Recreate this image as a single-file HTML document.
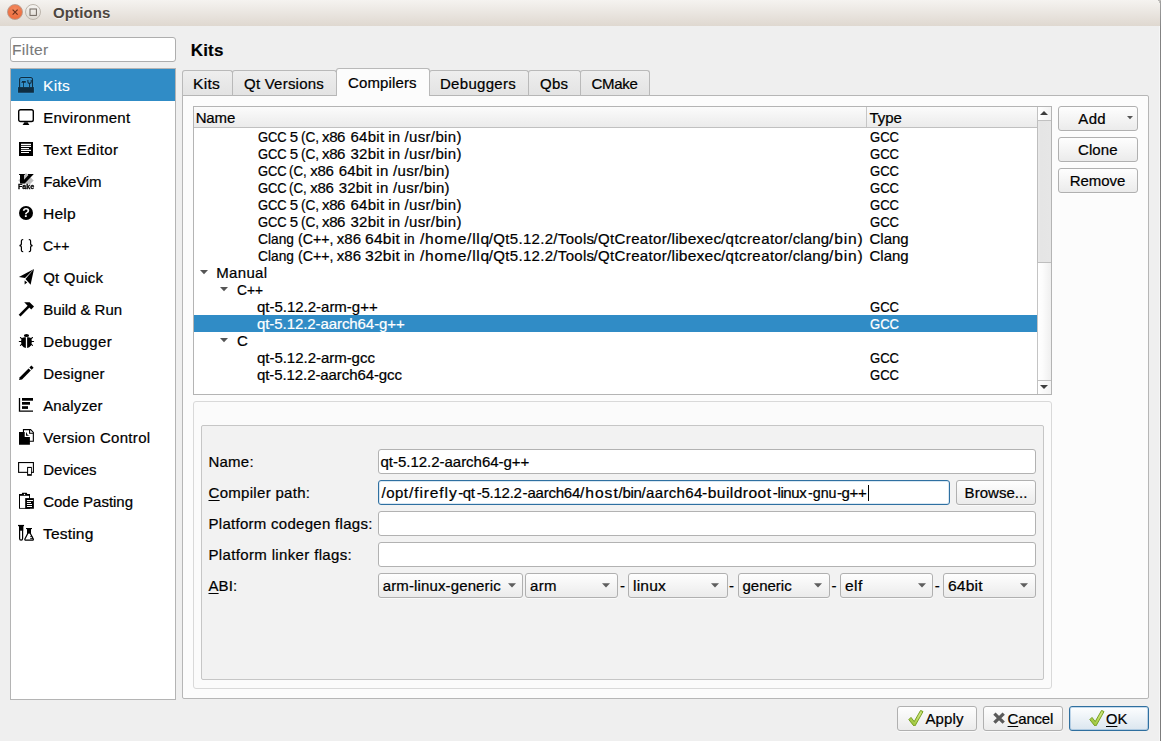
<!DOCTYPE html>
<html><head><meta charset="utf-8"><title>Options</title>
<style>
*{box-sizing:border-box;margin:0;padding:0}
html,body{width:1161px;height:741px;overflow:hidden}
body{background:#efefef;font-family:"Liberation Sans",sans-serif;font-size:15px;color:#000;position:relative}
div,span,svg{position:absolute}
span.t{white-space:pre;line-height:17px;height:17px;-webkit-text-stroke:0.22px}
u{text-decoration:underline;text-underline-offset:2px;text-decoration-thickness:1px}
#titlebar{left:0;top:0;width:1161px;height:26px;background:linear-gradient(#f5f3f0,#ebe7e2 45%,#dfd8d0);}
.wb{top:4px;width:16px;height:16px;border-radius:8px}
#filter{left:10px;top:37px;width:166px;height:25px;background:#fff;border:1px solid #aeaeae;border-radius:3px}
#side{left:10px;top:68px;width:166px;height:632px;background:#fff;border:1px solid #b4b4b4}
#selrow{left:11px;top:69px;width:164px;height:32px;background:#308cc6}
svg.ic{width:16px;height:16px;left:18px;overflow:visible}
#pane{left:182px;top:95px;width:967px;height:604px;background:#fcfcfc;border:1px solid #b6b6b6;border-radius:0 2px 2px 2px}
.tab{top:70px;height:26px;border:1px solid #b9b9b9;border-bottom:1px solid #b6b6b6;border-radius:3px 3px 0 0;background:linear-gradient(#eeeeee,#e3e3e3)}
.tab.on{top:68px;height:28px;background:#fcfcfc;border-bottom:none}
#tree{left:193px;top:106px;width:859px;height:289px;background:#fff;border:1px solid #b4b4b4}
#hdr{left:194px;top:107px;width:843px;height:21px;background:linear-gradient(#fbfbfb,#ebebeb);border-bottom:1px solid #c0c0c0}
#treesel{left:194px;top:315px;width:843px;height:17px;background:#308cc6}
.btn{border:1px solid #b0b0b0;border-radius:3px;background:linear-gradient(#fefefe,#ebebeb);height:25px;box-shadow:0 1px 0 rgba(255,255,255,.6)}
.inp{background:#fff;border:1px solid #b2b2b2;border-radius:3px;height:25px}
#gb1{left:193px;top:401px;width:859px;height:288px;border:1px solid #d9d9d9;border-radius:3px;background:#fbfbfb}
#gb2{left:201px;top:425px;width:843px;height:255px;border:1px solid #c6c6c6;border-radius:2px;background:#f2f2f2}
.r{left:0;top:0;width:0;height:0}
</style></head><body>
<div id="titlebar"></div>
<div class="wb" style="left:6.5px;background:radial-gradient(circle at 50% 30%,#f28a5f,#ef7345 60%,#ec6a3a);border:1px solid #bd9c8c"></div>
<svg style="left:6.5px;top:4px;width:16px;height:16px" viewBox="0 0 16 16"><path d="M5.6 5.6 L10.6 10.6 M10.6 5.6 L5.6 10.6" stroke="#6a301b" stroke-width="1.15" fill="none"/></svg>
<div class="wb" style="left:25px;background:linear-gradient(#f6f4f1,#dfdad3);border:1px solid #bcb5ac"></div>
<svg style="left:25px;top:4px;width:16px;height:16px" viewBox="0 0 16 16"><rect x="5" y="5" width="6.4" height="6.4" stroke="#6e675f" stroke-width="1" fill="none"/></svg>
<span class="t" style="left:53px;top:4px;font-weight:bold;color:#4c4640;letter-spacing:0.114px;-webkit-text-stroke:0;text-shadow:0 1px 0 rgba(255,255,255,.7);">Options</span>
<div style="left:1159px;top:26px;width:1px;height:715px;background:#f6f6f6"></div><div style="left:1160px;top:1px;width:1px;height:740px;background:linear-gradient(#a2a2a2,#828282 30px,#7c7c7c)"></div><div style="left:1158px;top:0;width:3px;height:1px;background:#b9b7b4"></div><div style="left:1159px;top:1px;width:1px;height:2px;background:#c4c2bf"></div>
<div id="filter"></div><span class="t" style="left:12.4px;top:41px;color:#7a7a7a;transform:scaleX(1.0400);transform-origin:0 0;letter-spacing:0.294px;-webkit-text-stroke:0.1px;">Filter</span>
<div id="side"></div><div id="selrow"></div>
<span class="t" style="left:43.2px;top:77px;color:#fff;transform:scaleX(1.0400);transform-origin:0 0;letter-spacing:0.293px;-webkit-text-stroke:0.1px;">Kits</span>
<span class="t" style="left:43.2px;top:109px;letter-spacing:0.276px;">Environment</span>
<span class="t" style="left:43.2px;top:141px;letter-spacing:0.393px;">Text Editor</span>
<span class="t" style="left:43.2px;top:173px;letter-spacing:-0.102px;">FakeVim</span>
<span class="t" style="left:43.2px;top:205px;transform:scaleX(1.0400);transform-origin:0 0;letter-spacing:0.183px;">Help</span>
<span class="t" style="left:43.2px;top:237px;transform:scaleX(0.9338);transform-origin:0 0;">C++</span>
<span class="t" style="left:43.2px;top:269px;letter-spacing:0.194px;">Qt Quick</span>
<span class="t" style="left:43.2px;top:301px;letter-spacing:-0.037px;">Build &amp; Run</span>
<span class="t" style="left:43.2px;top:333px;letter-spacing:0.373px;">Debugger</span>
<span class="t" style="left:43.2px;top:365px;letter-spacing:0.181px;">Designer</span>
<span class="t" style="left:43.2px;top:397px;letter-spacing:0.148px;">Analyzer</span>
<span class="t" style="left:43.2px;top:429px;letter-spacing:0.313px;">Version Control</span>
<span class="t" style="left:43.2px;top:461px;letter-spacing:0.008px;">Devices</span>
<span class="t" style="left:43.2px;top:493px;letter-spacing:-0.020px;">Code Pasting</span>
<span class="t" style="left:43.2px;top:525px;transform:scaleX(1.0400);transform-origin:0 0;letter-spacing:0.149px;">Testing</span>
<svg class="ic" style="top:77px" viewBox="0 0 16 16"><g opacity="0.75"><rect x="1.6" y="0.5" width="12.9" height="12" rx="2" fill="none" stroke="#3d9bd8" stroke-width="2.0"/><rect x="0.05" y="10.1" width="15.85" height="5.65" fill="#3d9bd8" stroke="#3d9bd8" stroke-width="1.2"/><path d="M3.1 5.7 L4.2 4.1 H7.8 V5.7 Z M5.1 5.7 H5.95 V10.2 H5.1 Z" fill="#3d9bd8" stroke="#3d9bd8" stroke-width="1.2"/><path d="M9.9 3 V4.9 Q9.9 6.3 11.55 6.3 Q13.2 6.3 13.2 4.9 V3" fill="none" stroke="#3d9bd8" stroke-width="2.0"/><path d="M11.6 6 V10.2" stroke="#3d9bd8" stroke-width="1.9"/></g><rect x="1.6" y="0.5" width="12.9" height="12" rx="2" fill="none" stroke="#0f2d41" stroke-width="1.15"/><rect x="0.05" y="10.1" width="15.85" height="5.65" fill="#0f2d41" stroke="#0f2d41" stroke-width="0"/><path d="M3.1 5.7 L4.2 4.1 H7.8 V5.7 Z M5.1 5.7 H5.95 V10.2 H5.1 Z" fill="#0f2d41" stroke="#0f2d41" stroke-width="0"/><path d="M9.9 3 V4.9 Q9.9 6.3 11.55 6.3 Q13.2 6.3 13.2 4.9 V3" fill="none" stroke="#0f2d41" stroke-width="1.15"/><path d="M11.6 6 V10.2" stroke="#0f2d41" stroke-width="1"/></svg>
<svg class="ic" style="top:109px" viewBox="0 0 16 16"><rect x="0.7" y="0.7" width="14.6" height="11.8" rx="1.8" fill="#fff" stroke="#000" stroke-width="1.4"/><path d="M6.4 13.2 H9.6 L11.4 16 H4.6 Z" fill="#000"/></svg>
<svg class="ic" style="top:141px" viewBox="0 0 16 16"><rect x="1" y="1" width="14" height="14" fill="#000"/><path d="M3 3.3 H13 M3 5.4 H13 M3 7.5 H11 M3 9.4 H13 M3 11.5 H11" stroke="#fff" stroke-width="1.15"/></svg>
<svg class="ic" style="top:173px;will-change:transform" viewBox="0 0 16 16"><path d="M8 0 L15.7 7.6 L8 15.2 L0.3 7.6 Z" fill="#bcbcbc"/><path d="M1 0.9 H6.85 V2 H6 V6.7 L10.5 2 H9.9 V1 H15.6 V1.3 L6.7 10.4 H2 V2 H1 Z" fill="#000"/><rect x="-0.3" y="10.9" width="16.6" height="5.1" fill="#fff" opacity="0.85"/><text x="-0.1" y="15.9" font-family="Liberation Sans, sans-serif" font-weight="bold" font-size="6.8" textLength="16.2" lengthAdjust="spacingAndGlyphs" fill="#000" stroke="#000" stroke-width="0.3">Fake</text></svg>
<svg class="ic" style="top:205px;will-change:transform" viewBox="0 0 16 16"><circle cx="8" cy="8" r="7" fill="#000"/><text x="8" y="12.3" text-anchor="middle" font-family="Liberation Sans, sans-serif" font-weight="bold" font-size="12.5" fill="#fff" opacity="0.99">?</text></svg>
<svg class="ic" style="top:237px" viewBox="0 0 16 16"><path d="M5.2 2.6 Q3.4 2.4 3.4 4.2 V6.6 Q3.4 8.6 1.4 8.6 Q3.4 8.6 3.4 10.6 V13 Q3.4 14.8 5.2 14.6" fill="none" stroke="#000" stroke-width="1.2"/><path d="M10.8 2.6 Q12.6 2.4 12.6 4.2 V6.6 Q12.6 8.6 14.6 8.6 Q12.6 8.6 12.6 10.6 V13 Q12.6 14.8 10.8 14.6" fill="none" stroke="#000" stroke-width="1.2"/></svg>
<svg class="ic" style="top:269px" viewBox="0 0 16 16"><path d="M0.9 8 L16 0 L7 8.9 Z" fill="#000"/><path d="M16 0 L12.6 15.8 L7.5 10 Z" fill="#000"/><path d="M6.6 11.6 V15.6 L9.2 13.4 Z" fill="#000"/></svg>
<svg class="ic" style="top:301px" viewBox="0 0 16 16"><path d="M1.6 14.6 L11 5.2" stroke="#000" stroke-width="2.6"/><path d="M6.2 1.2 H11.6 L16 5.6 L13.2 8.4 L9.4 4.6 Z" fill="#000"/></svg>
<svg class="ic" style="top:333px" viewBox="0 0 16 16"><ellipse cx="8.47" cy="2.5" rx="2.6" ry="1.5" fill="#000"/><path d="M7.85 4.3 V15 Q5.4 14.6 4 12.4 Q2.9 10.4 3.1 8 Q3.2 5.8 4.4 4.7 Q5.6 4 7.85 4.3 Z" fill="#000"/><path d="M9.1 4.3 V15 Q11.5 14.6 12.9 12.4 Q14 10.4 13.85 8 Q13.7 5.8 12.5 4.7 Q11.3 4 9.1 4.3 Z" fill="#000"/><path d="M2.4 4.5 L4 5.8 M1.3 8.47 H3.4 M2.4 12.45 L4.2 11 M14.5 4.5 L12.9 5.8 M15.6 8.47 H13.5 M14.5 12.45 L12.7 11" stroke="#000" stroke-width="1.05" stroke-linecap="round"/></svg>
<svg class="ic" style="top:365px" viewBox="0 0 16 16"><path d="M1 15 L1.8 12.2 L10.6 3.4 L12.8 5.6 L4 14.4 Z" fill="#000"/><path d="M11.4 2.6 L13.4 0.6 L15.6 2.8 L13.6 4.8 Z" fill="#000"/></svg>
<svg class="ic" style="top:397px" viewBox="0 0 16 16"><path d="M1.5 0.9 V14.2 H15" fill="none" stroke="#000" stroke-width="1.3"/><rect x="4" y="1" width="11" height="2.7"/><rect x="4" y="5" width="8" height="2.7"/><rect x="4" y="9.2" width="6" height="2.7"/></svg>
<svg class="ic" style="top:429px" viewBox="0 0 16 16"><path d="M5.45 0.6 H12.6 L15.35 3.4 V12.3 H5.45 Z" fill="#fff" stroke="#000" stroke-width="1.1"/><path d="M11.6 0.6 V4.2 H15.3" fill="none" stroke="#000" stroke-width="1.1"/><path d="M1 3 H6.7 V8.1 H11.9 V15.75 H1 Z" fill="#000"/><path d="M8 3.2 V6.85 H11.7 Q9 6 8.3 3.2 Z" fill="#000"/></svg>
<svg class="ic" style="top:461px" viewBox="0 0 16 16"><rect x="0.6" y="1.55" width="14.8" height="9.8" fill="#fff" stroke="#000" stroke-width="1.1"/><rect x="9.1" y="5.9" width="4.7" height="8.9" fill="#000"/><rect x="10.1" y="7" width="2.9" height="6.1" fill="#fff"/></svg>
<svg class="ic" style="top:493px" viewBox="0 0 16 16"><rect x="1" y="1" width="11" height="14.75" fill="#000"/><rect x="2" y="2.8" width="9.05" height="12.15" fill="#fff"/><rect x="3.9" y="-0.25" width="5.2" height="1.6" rx="0.4" fill="#000"/><circle cx="6.5" cy="1.5" r="0.7" fill="#fff"/><rect x="7.2" y="5.1" width="8.7" height="10.65" fill="#000"/><path d="M8.95 7.5 H14.95 M8.95 9.45 H13 M8.95 11.5 H14 M8.95 13.5 H14" stroke="#fff" stroke-width="1"/></svg>
<svg class="ic" style="top:525px" viewBox="0 0 16 16"><path d="M0 0.55 H6.05" stroke="#000" stroke-width="1.3"/><path d="M1.6 1 V13.6 Q1.6 15.2 3.1 15.2 Q4.6 15.2 4.6 13.6 V1" fill="#fff" stroke="#000" stroke-width="1.2"/><rect x="1" y="1" width="4.2" height="4.7" fill="#000"/><path d="M8 3.55 H14" stroke="#000" stroke-width="1.1"/><path d="M9.7 4 V8.6 L6.9 14 Q6.5 15.2 7.8 15.2 H14.4 Q15.7 15.2 15.3 14 L12.4 8.6 V4" fill="#fff" stroke="#000" stroke-width="1.2"/><rect x="9.1" y="4" width="3.9" height="4.6" fill="#000"/><path d="M12.2 11.6 H14.3 M12.2 13.6 H15" stroke="#000" stroke-width="0.9"/></svg>
<span class="t" style="left:190.7px;top:42px;font-size:17px;font-weight:bold;letter-spacing:0.213px;-webkit-text-stroke:0.15px;">Kits</span>
<div id="pane"></div>
<div class="tab" style="left:182px;width:51px"></div><span class="t" style="left:193.3px;top:75px;transform:scaleX(1.0400);transform-origin:0 0;letter-spacing:0.293px;">Kits</span>
<div class="tab" style="left:232px;width:105px"></div><span class="t" style="left:244px;top:75px;letter-spacing:0.227px;">Qt Versions</span>
<div class="tab on" style="left:336px;width:94px"></div><span class="t" style="left:348px;top:74px;letter-spacing:0.136px;">Compilers</span>
<div class="tab" style="left:429px;width:100px"></div><span class="t" style="left:440px;top:75px;letter-spacing:0.290px;">Debuggers</span>
<div class="tab" style="left:528px;width:53px"></div><span class="t" style="left:540px;top:75px;letter-spacing:0.245px;">Qbs</span>
<div class="tab" style="left:580px;width:70px"></div><span class="t" style="left:591.5px;top:75px;letter-spacing:-0.292px;">CMake</span>
<div id="tree"></div><div id="hdr"></div><div id="treesel"></div>
<div style="left:866px;top:107px;width:1px;height:20px;background:#c6c6c6"></div>
<span class="t" style="left:195.7px;top:109px;letter-spacing:-0.157px;">Name</span><span class="t" style="left:869.5px;top:109px;letter-spacing:-0.092px;">Type</span>
<div class="r"><span class="t" style="left:257.6px;top:128px;transform:scaleX(0.8597);transform-origin:0 0;">GCC </span><span class="t" style="left:289.8px;top:128px;">5 </span><span class="t" style="left:301.2px;top:128px;transform:scaleX(0.9082);transform-origin:0 0;">(C, </span><span class="t" style="left:322px;top:128px;letter-spacing:-0.371px;">x86 </span><span class="t" style="left:350.4px;top:128px;letter-spacing:0.285px;">64bit </span><span class="t" style="left:388.3px;top:128px;letter-spacing:0.067px;">in </span><span class="t" style="left:404.4px;top:128px;letter-spacing:0.364px;">/usr/bin)</span></div><span class="t" style="left:869.5px;top:128px;transform:scaleX(0.8687);transform-origin:0 0;">GCC</span>
<div class="r"><span class="t" style="left:257.6px;top:145px;transform:scaleX(0.8597);transform-origin:0 0;">GCC </span><span class="t" style="left:289.8px;top:145px;">5 </span><span class="t" style="left:301.2px;top:145px;transform:scaleX(0.9082);transform-origin:0 0;">(C, </span><span class="t" style="left:322px;top:145px;letter-spacing:-0.371px;">x86 </span><span class="t" style="left:350.4px;top:145px;letter-spacing:0.285px;">32bit </span><span class="t" style="left:388.3px;top:145px;letter-spacing:0.067px;">in </span><span class="t" style="left:404.4px;top:145px;letter-spacing:0.364px;">/usr/bin)</span></div><span class="t" style="left:869.5px;top:145px;transform:scaleX(0.8687);transform-origin:0 0;">GCC</span>
<div class="r"><span class="t" style="left:257.6px;top:162px;transform:scaleX(0.8597);transform-origin:0 0;">GCC </span><span class="t" style="left:289.4px;top:162px;transform:scaleX(0.8817);transform-origin:0 0;">(C, </span><span class="t" style="left:310.3px;top:162px;letter-spacing:-0.371px;">x86 </span><span class="t" style="left:338.7px;top:162px;letter-spacing:0.185px;">64bit </span><span class="t" style="left:376.3px;top:162px;letter-spacing:0.367px;">in </span><span class="t" style="left:393.1px;top:162px;letter-spacing:0.289px;">/usr/bin)</span></div><span class="t" style="left:869.5px;top:162px;transform:scaleX(0.8687);transform-origin:0 0;">GCC</span>
<div class="r"><span class="t" style="left:257.6px;top:179px;transform:scaleX(0.8597);transform-origin:0 0;">GCC </span><span class="t" style="left:289.4px;top:179px;transform:scaleX(0.8817);transform-origin:0 0;">(C, </span><span class="t" style="left:310.3px;top:179px;letter-spacing:-0.371px;">x86 </span><span class="t" style="left:338.7px;top:179px;letter-spacing:0.185px;">32bit </span><span class="t" style="left:376.3px;top:179px;letter-spacing:0.367px;">in </span><span class="t" style="left:393.1px;top:179px;letter-spacing:0.289px;">/usr/bin)</span></div><span class="t" style="left:869.5px;top:179px;transform:scaleX(0.8687);transform-origin:0 0;">GCC</span>
<div class="r"><span class="t" style="left:257.6px;top:196px;transform:scaleX(0.8597);transform-origin:0 0;">GCC </span><span class="t" style="left:289.8px;top:196px;">5 </span><span class="t" style="left:301.2px;top:196px;transform:scaleX(0.9082);transform-origin:0 0;">(C, </span><span class="t" style="left:322px;top:196px;letter-spacing:-0.371px;">x86 </span><span class="t" style="left:350.4px;top:196px;letter-spacing:0.285px;">64bit </span><span class="t" style="left:388.3px;top:196px;letter-spacing:0.067px;">in </span><span class="t" style="left:404.4px;top:196px;letter-spacing:0.364px;">/usr/bin)</span></div><span class="t" style="left:869.5px;top:196px;transform:scaleX(0.8687);transform-origin:0 0;">GCC</span>
<div class="r"><span class="t" style="left:257.6px;top:213px;transform:scaleX(0.8597);transform-origin:0 0;">GCC </span><span class="t" style="left:289.8px;top:213px;">5 </span><span class="t" style="left:301.2px;top:213px;transform:scaleX(0.9082);transform-origin:0 0;">(C, </span><span class="t" style="left:322px;top:213px;letter-spacing:-0.371px;">x86 </span><span class="t" style="left:350.4px;top:213px;letter-spacing:0.285px;">32bit </span><span class="t" style="left:388.3px;top:213px;letter-spacing:0.067px;">in </span><span class="t" style="left:404.4px;top:213px;letter-spacing:0.364px;">/usr/bin)</span></div><span class="t" style="left:869.5px;top:213px;transform:scaleX(0.8687);transform-origin:0 0;">GCC</span>
<div class="r"><span class="t" style="left:257.8px;top:230px;transform:scaleX(0.9164);transform-origin:0 0;">Clang </span><span class="t" style="left:298px;top:230px;transform:scaleX(0.9437);transform-origin:0 0;">(C++, </span><span class="t" style="left:336.8px;top:230px;letter-spacing:0.029px;">x86 </span><span class="t" style="left:365.3px;top:230px;transform:scaleX(1.0400);transform-origin:0 0;letter-spacing:0.242px;">64bit </span><span class="t" style="left:404px;top:230px;transform:scaleX(0.9089);transform-origin:0 0;">in </span><span class="t" style="left:419.9px;top:230px;transform:scaleX(1.0400);transform-origin:0 0;letter-spacing:0.716px;">/home/llq</span><span class="t" style="left:488.8px;top:230px;letter-spacing:0.315px;">/Qt5.12.2/Tools</span><span class="t" style="left:593.6px;top:230px;letter-spacing:0.342px;">/QtCreator</span><span class="t" style="left:666.7px;top:230px;transform:scaleX(1.0400);transform-origin:0 0;letter-spacing:0.177px;">/libexec</span><span class="t" style="left:721px;top:230px;letter-spacing:0.437px;">/qtcreator</span><span class="t" style="left:788.3px;top:230px;letter-spacing:0.163px;">/clang</span><span class="t" style="left:828.8px;top:230px;transform:scaleX(1.0400);transform-origin:0 0;letter-spacing:0.829px;">/bin)</span></div><span class="t" style="left:869.5px;top:230px;letter-spacing:-0.012px;">Clang</span>
<div class="r"><span class="t" style="left:257.8px;top:247px;transform:scaleX(0.9164);transform-origin:0 0;">Clang </span><span class="t" style="left:298px;top:247px;transform:scaleX(0.9437);transform-origin:0 0;">(C++, </span><span class="t" style="left:336.8px;top:247px;letter-spacing:0.029px;">x86 </span><span class="t" style="left:365.3px;top:247px;transform:scaleX(1.0400);transform-origin:0 0;letter-spacing:0.242px;">32bit </span><span class="t" style="left:404px;top:247px;transform:scaleX(0.9089);transform-origin:0 0;">in </span><span class="t" style="left:419.9px;top:247px;transform:scaleX(1.0400);transform-origin:0 0;letter-spacing:0.716px;">/home/llq</span><span class="t" style="left:488.8px;top:247px;letter-spacing:0.315px;">/Qt5.12.2/Tools</span><span class="t" style="left:593.6px;top:247px;letter-spacing:0.342px;">/QtCreator</span><span class="t" style="left:666.7px;top:247px;transform:scaleX(1.0400);transform-origin:0 0;letter-spacing:0.177px;">/libexec</span><span class="t" style="left:721px;top:247px;letter-spacing:0.437px;">/qtcreator</span><span class="t" style="left:788.3px;top:247px;letter-spacing:0.163px;">/clang</span><span class="t" style="left:828.8px;top:247px;transform:scaleX(1.0400);transform-origin:0 0;letter-spacing:0.829px;">/bin)</span></div><span class="t" style="left:869.5px;top:247px;letter-spacing:-0.012px;">Clang</span>
<span class="t" style="left:216.2px;top:264px;letter-spacing:0.347px;">Manual</span>
<span class="t" style="left:237px;top:281px;transform:scaleX(0.9163);transform-origin:0 0;">C++</span>
<span class="t" style="left:257px;top:298px;letter-spacing:-0.015px;">qt-5.12.2-arm-g++</span><span class="t" style="left:869.5px;top:298px;transform:scaleX(0.8687);transform-origin:0 0;">GCC</span>
<span class="t" style="left:257px;top:315px;color:#fff;letter-spacing:-0.075px;">qt-5.12.2-aarch64-g++</span><span class="t" style="left:869.5px;top:315px;color:#fff;transform:scaleX(0.8687);transform-origin:0 0;">GCC</span>
<span class="t" style="left:237px;top:332px;">C</span>
<span class="t" style="left:257px;top:349px;letter-spacing:-0.030px;">qt-5.12.2-arm-gcc</span><span class="t" style="left:869.5px;top:349px;transform:scaleX(0.8687);transform-origin:0 0;">GCC</span>
<span class="t" style="left:257px;top:366px;letter-spacing:-0.087px;">qt-5.12.2-aarch64-gcc</span><span class="t" style="left:869.5px;top:366px;transform:scaleX(0.8687);transform-origin:0 0;">GCC</span>
<svg style="left:200px;top:269px;width:8px;height:6px" viewBox="0 0 8 6"><path d="M0 1 L8 1 L4 5.2 Z" fill="#555"/></svg><svg style="left:220px;top:286px;width:8px;height:6px" viewBox="0 0 8 6"><path d="M0 1 L8 1 L4 5.2 Z" fill="#555"/></svg><svg style="left:220px;top:337px;width:8px;height:6px" viewBox="0 0 8 6"><path d="M0 1 L8 1 L4 5.2 Z" fill="#555"/></svg>
<div style="left:1037px;top:107px;width:14px;height:287px;background:linear-gradient(90deg,#ffffff,#fcfcfc 35%,#efefef);border-left:1px solid #c4c4c4"></div><div style="left:1037px;top:120px;width:14px;height:143px;background:linear-gradient(90deg,#e9e9e9,#e5e5e5 20%,#e6e6e6);border:1px solid #bebebe;border-right:none"></div><div style="left:1037px;top:107px;width:14px;height:14px;background:linear-gradient(90deg,#ffffff,#f3f3f3);border:1px solid #c1c1c1;border-right:none;border-top:none"></div><div style="left:1037px;top:380px;width:14px;height:14px;background:linear-gradient(90deg,#ffffff,#f3f3f3);border:1px solid #c1c1c1;border-right:none;border-bottom:none"></div><svg style="left:1040px;top:111px;width:8px;height:4px" viewBox="0 0 8 4"><path d="M0 4 L8 4 L4 0 Z" fill="#3e3e3e"/></svg><svg style="left:1040px;top:385px;width:8px;height:4px" viewBox="0 0 8 4"><path d="M0 0 L8 0 L4 4 Z" fill="#3e3e3e"/></svg>
<div class="btn" style="left:1058px;top:106px;width:80px"></div><span class="t" style="left:1078.3px;top:110px;letter-spacing:0.326px;">Add</span><svg style="left:1126.8px;top:116.2px;width:6px;height:3.4px" viewBox="0 0 6 3.4"><path d="M0 0 L6 0 L3 3.3 Z" fill="#555"/></svg><div class="btn" style="left:1058px;top:137px;width:80px"></div><span class="t" style="left:1078px;top:141px;letter-spacing:0.088px;">Clone</span><div class="btn" style="left:1058px;top:168px;width:80px"></div><span class="t" style="left:1069.7px;top:172px;letter-spacing:-0.042px;">Remove</span>
<div id="gb1"></div><div id="gb2"></div>
<span class="t" style="left:208.5px;top:453px;letter-spacing:0.222px;">Name:</span><span class="t" style="left:208.5px;top:484px;letter-spacing:0.302px;"><u>C</u>ompiler path:</span><span class="t" style="left:208.5px;top:515px;letter-spacing:0.285px;">Platform codegen flags:</span><span class="t" style="left:208.5px;top:546px;letter-spacing:0.352px;">Platform linker flags:</span><span class="t" style="left:208.5px;top:577px;letter-spacing:0.074px;"><u>A</u>BI:</span>
<div class="inp" style="left:378px;top:449px;width:658px"></div><span class="t" style="left:380.5px;top:453px;letter-spacing:-0.020px;">qt-5.12.2-aarch64-g++</span><div class="inp" style="left:378px;top:480px;width:572px;border-color:#2f70a1;box-shadow:inset 0 0 0 1px rgba(120,170,210,.28)"></div><div class="r"><span class="t" style="left:381.6px;top:484px;letter-spacing:0.449px;">/opt</span><span class="t" style="left:408.8px;top:484px;transform:scaleX(1.0400);transform-origin:0 0;letter-spacing:0.834px;">/firefly</span><span class="t" style="left:458.2px;top:484px;letter-spacing:-0.369px;">-qt</span><span class="t" style="left:476.8px;top:484px;letter-spacing:-0.259px;">-5.12.2</span><span class="t" style="left:522.6px;top:484px;letter-spacing:-0.208px;">-aarch64</span><span class="t" style="left:580px;top:484px;transform:scaleX(1.0400);transform-origin:0 0;letter-spacing:0.941px;">/host</span><span class="t" style="left:618.6px;top:484px;letter-spacing:-0.314px;">/bin</span><span class="t" style="left:641.6px;top:484px;letter-spacing:0.324px;">/aarch64</span><span class="t" style="left:702.4px;top:484px;transform:scaleX(1.0400);transform-origin:0 0;letter-spacing:0.427px;">-buildroot</span><span class="t" style="left:772.8px;top:484px;letter-spacing:-0.369px;">-linux</span><span class="t" style="left:808px;top:484px;transform:scaleX(0.9501);transform-origin:0 0;">-gnu</span><span class="t" style="left:837px;top:484px;letter-spacing:-0.399px;">-g++</span></div><div style="left:868px;top:485px;width:1px;height:16px;background:#000"></div><div class="btn" style="left:956px;top:480px;width:80px"></div><span class="t" style="left:964.6px;top:484px;letter-spacing:0.043px;">Browse...</span><div class="inp" style="left:378px;top:511px;width:658px"></div><div class="inp" style="left:378px;top:542px;width:658px"></div>
<div class="btn" style="left:378px;top:573px;width:145px"></div><span class="t" style="left:382.7px;top:577px;letter-spacing:0.133px;">arm-linux-generic</span><svg style="left:507.5px;top:583px;width:8px;height:5px" viewBox="0 0 8 5"><path d="M0 0.2 L8 0.2 L4 4.4 Z" fill="#5e5e5e"/></svg><div class="btn" style="left:525px;top:573px;width:93px"></div><span class="t" style="left:530px;top:577px;letter-spacing:0.331px;">arm</span><svg style="left:601.7px;top:583px;width:8px;height:5px" viewBox="0 0 8 5"><path d="M0 0.2 L8 0.2 L4 4.4 Z" fill="#5e5e5e"/></svg><div class="btn" style="left:628px;top:573px;width:100px"></div><span class="t" style="left:632.5px;top:577px;transform:scaleX(1.0400);transform-origin:0 0;letter-spacing:0.167px;">linux</span><svg style="left:711.2px;top:583px;width:8px;height:5px" viewBox="0 0 8 5"><path d="M0 0.2 L8 0.2 L4 4.4 Z" fill="#5e5e5e"/></svg><div class="btn" style="left:738px;top:573px;width:92px"></div><span class="t" style="left:742.5px;top:577px;letter-spacing:0.001px;">generic</span><svg style="left:814.0px;top:583px;width:8px;height:5px" viewBox="0 0 8 5"><path d="M0 0.2 L8 0.2 L4 4.4 Z" fill="#5e5e5e"/></svg><div class="btn" style="left:840px;top:573px;width:93px"></div><span class="t" style="left:845.3px;top:577px;transform:scaleX(1.0400);transform-origin:0 0;letter-spacing:0.365px;">elf</span><svg style="left:917.7px;top:583px;width:8px;height:5px" viewBox="0 0 8 5"><path d="M0 0.2 L8 0.2 L4 4.4 Z" fill="#5e5e5e"/></svg><div class="btn" style="left:943px;top:573px;width:93px"></div><span class="t" style="left:947.8px;top:577px;transform:scaleX(1.0400);transform-origin:0 0;letter-spacing:0.170px;">64bit</span><svg style="left:1020.2px;top:583px;width:8px;height:5px" viewBox="0 0 8 5"><path d="M0 0.2 L8 0.2 L4 4.4 Z" fill="#5e5e5e"/></svg><span class="t" style="left:620px;top:577px;">-</span><span class="t" style="left:729px;top:577px;">-</span><span class="t" style="left:831.5px;top:577px;">-</span><span class="t" style="left:934.7px;top:577px;">-</span>
<svg style="left:0;top:0;width:0;height:0"><defs><linearGradient id="gck" x1="0" y1="1" x2="1" y2="0"><stop offset="0" stop-color="#8fba33"/><stop offset="0.45" stop-color="#b5d755"/><stop offset="0.75" stop-color="#cfe680"/><stop offset="1" stop-color="#b9d95c"/></linearGradient></defs></svg><div class="btn" style="left:897px;top:706px;width:80px"></div><svg style="left:908px;top:710px;width:16px;height:16px" viewBox="0 0 16 16"><path d="M0.8 9.6 L3 7.4 L6.2 11.6 L12.6 0.4 L15 1.6 L7 15.9 L5.8 15.9 Z" fill="url(#gck)" stroke="#78a024" stroke-width="1" stroke-linejoin="round"/></svg><span class="t" style="left:925.5px;top:710px;letter-spacing:0.120px;">Apply</span><div class="btn" style="left:983px;top:706px;width:80px"></div><svg style="left:991px;top:710px;width:16px;height:16px" viewBox="0 0 16 16"><path d="M3.4 3.6 L12.7 12.6 M12.7 3.6 L3.4 12.6" stroke="#5b5b5b" stroke-width="3.3" fill="none"/></svg><span class="t" style="left:1007.6px;top:710px;letter-spacing:-0.192px;"><u>C</u>ancel</span><div class="btn" style="left:1069px;top:706px;width:80px;border-color:#2f6f9f;box-shadow:inset 0 0 0 1px rgba(90,150,200,.35);background:linear-gradient(#fdfeff,#dbe6ef)"></div><svg style="left:1089px;top:710px;width:16px;height:16px" viewBox="0 0 16 16"><path d="M0.8 9.6 L3 7.4 L6.2 11.6 L12.6 0.4 L15 1.6 L7 15.9 L5.8 15.9 Z" fill="url(#gck)" stroke="#78a024" stroke-width="1" stroke-linejoin="round"/></svg><span class="t" style="left:1105.7px;top:710px;transform:scaleX(0.9784);transform-origin:0 0;"><u>O</u>K</span>
</body></html>
